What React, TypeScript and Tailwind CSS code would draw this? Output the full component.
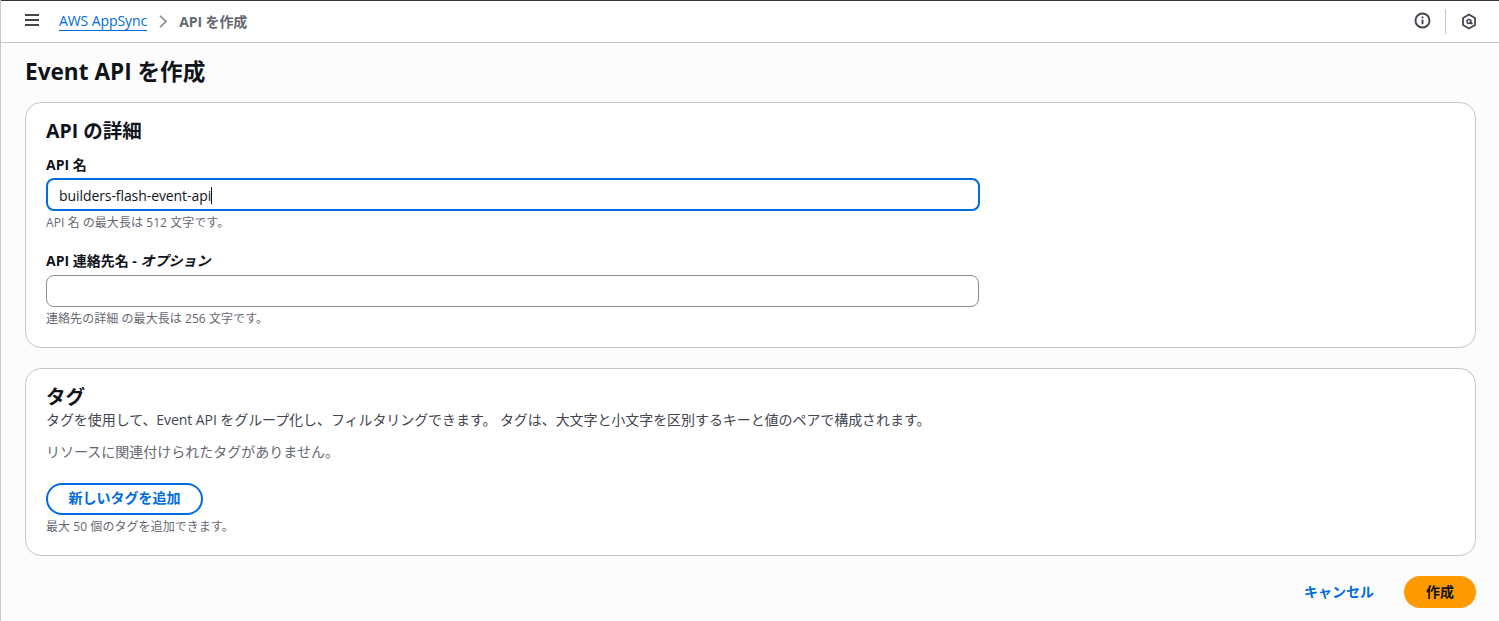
const font = { fontFamily: '"Open Sans", "Noto Sans CJK JP", sans-serif' };

function Hint({ children, className }: { children: React.ReactNode; className: string }) {
  return <p className={`text-[12px] leading-[16px] tracking-[0.06px] text-[#656871] ${className}`}>{children}</p>;
}

export default function App() {
  return (
    <div style={font} className="relative h-[621px] w-full overflow-hidden bg-[#fcfcfc] text-[#0f141a] border-l border-[#c6c6cd]">
      <div className="absolute -left-px top-0 w-px h-[15px] bg-[#16191f]" />
      <div className="h-px bg-[#333843]" />
      <header className="h-[42px] bg-white border-b border-[#c6c6cd] flex items-center pl-[24px] pr-[22px]">
        <svg width="14" height="12" viewBox="0 0 14 12" stroke="#424650" strokeWidth="2" className="-mt-[4px]">
          <path d="M0 1h14M0 6h14M0 11h14" />
        </svg>
        <a className="ml-[20px] text-[14px] tracking-[-0.08px] font-medium text-[#006ce0] border-b border-[#006ce0] leading-[18px]">AWS AppSync</a>
        <svg width="8" height="13" viewBox="0 0 8 13" fill="none" stroke="#8c8c94" strokeWidth="1.6" className="ml-[12px]">
          <path d="M1 .8l6 5.7-6 5.7" />
        </svg>
        <span className="ml-[12px] text-[14px] tracking-[-0.1px] font-bold text-[#656871]">API を作成</span>
        <div className="ml-auto flex items-center">
          <svg width="17" height="17" viewBox="0 0 16 16" fill="none" stroke="#424650" strokeWidth="1.8" className="-mt-[3px]">
            <circle cx="8" cy="8" r="6.6" />
            <path d="M8 7v4.5M8 4.2v1.6" />
          </svg>
          <div className="w-px h-[25px] bg-[#c6c6cd] ml-[14px]" />
          <svg width="16" height="17" viewBox="0 0 16 17" fill="none" stroke="#424650" strokeWidth="1.8" className="ml-[15px]">
            <path d="M8 1.5l6 3.4v7.2l-6 3.4-6-3.4V4.9z" />
            <circle cx="8" cy="8.5" r="2" strokeWidth="1.5" />
            <path d="M8.5 9l3 2" strokeWidth="1.6" />
          </svg>
        </div>
      </header>

      <main className="pl-[24px] pr-[23px]">
        <h1 className="text-[22.6px] leading-[30px] font-bold mt-[14px]">Event API を作成</h1>

        <section className="mt-[15px] h-[246px] rounded-[16px] border border-[#c6c6cd] bg-white pt-[16px] px-[20px]">
          <h2 className="text-[19.5px] leading-[24px] font-bold">API の詳細</h2>
          <label className="block mt-[13px] text-[14px] leading-[18px] font-bold">API 名</label>
          <div className="mt-[4px] w-[934px] h-[33px] rounded-[8px] border-2 border-[#006ce0] bg-white flex items-center pl-[11px] pt-[2px] text-[14px] tracking-[-0.08px]">
            builders-flash-event-api<span className="w-px h-[17px] bg-[#0f141a]" />
          </div>
          <Hint className="mt-[4px]">API 名 の最大長は 512 文字です。</Hint>
          <label className="block mt-[21px] text-[14px] leading-[18px] font-bold">
            API 連絡先名 - <i>オプション</i>
          </label>
          <div className="mt-[5px] w-[933px] h-[32px] rounded-[8px] border border-[#8c8c94] bg-white" />
          <Hint className="mt-[4px]">連絡先の詳細 の最大長は 256 文字です。</Hint>
        </section>

        <section className="mt-[20px] h-[188px] rounded-[16px] border border-[#c6c6cd] bg-white pt-[16px] px-[20px]">
          <h2 className="text-[19.5px] leading-[24px] font-bold">タグ</h2>
          <p className="text-[14px] leading-[18px] tracking-[-0.07px] text-[#424650] mt-[2px]">
            タグを使用して、Event API をグループ化し、フィルタリングできます。 タグは、大文字と小文字を区別するキーと値のペアで構成されます。
          </p>
          <p className="text-[14px] leading-[18px] text-[#656871] mt-[14px]">リソースに関連付けられたタグがありません。</p>
          <button className="block mt-[22px] w-[157px] h-[32px] rounded-full border-2 border-[#006ce0] pb-[3px] text-[14px] font-bold text-[#006ce0]">
            新しいタグを追加
          </button>
          <Hint className="mt-[4px]">最大 50 個のタグを追加できます。</Hint>
        </section>

        <div className="mt-[20px] flex items-center justify-end">
          <button className="pb-[2px] text-[14px] font-bold text-[#006ce0] mr-[30px]">キャンセル</button>
          <button className="w-[72px] h-[32px] pb-[2px] rounded-full bg-[#ff9900] text-[14px] font-bold">作成</button>
        </div>
      </main>
    </div>
  );
}
